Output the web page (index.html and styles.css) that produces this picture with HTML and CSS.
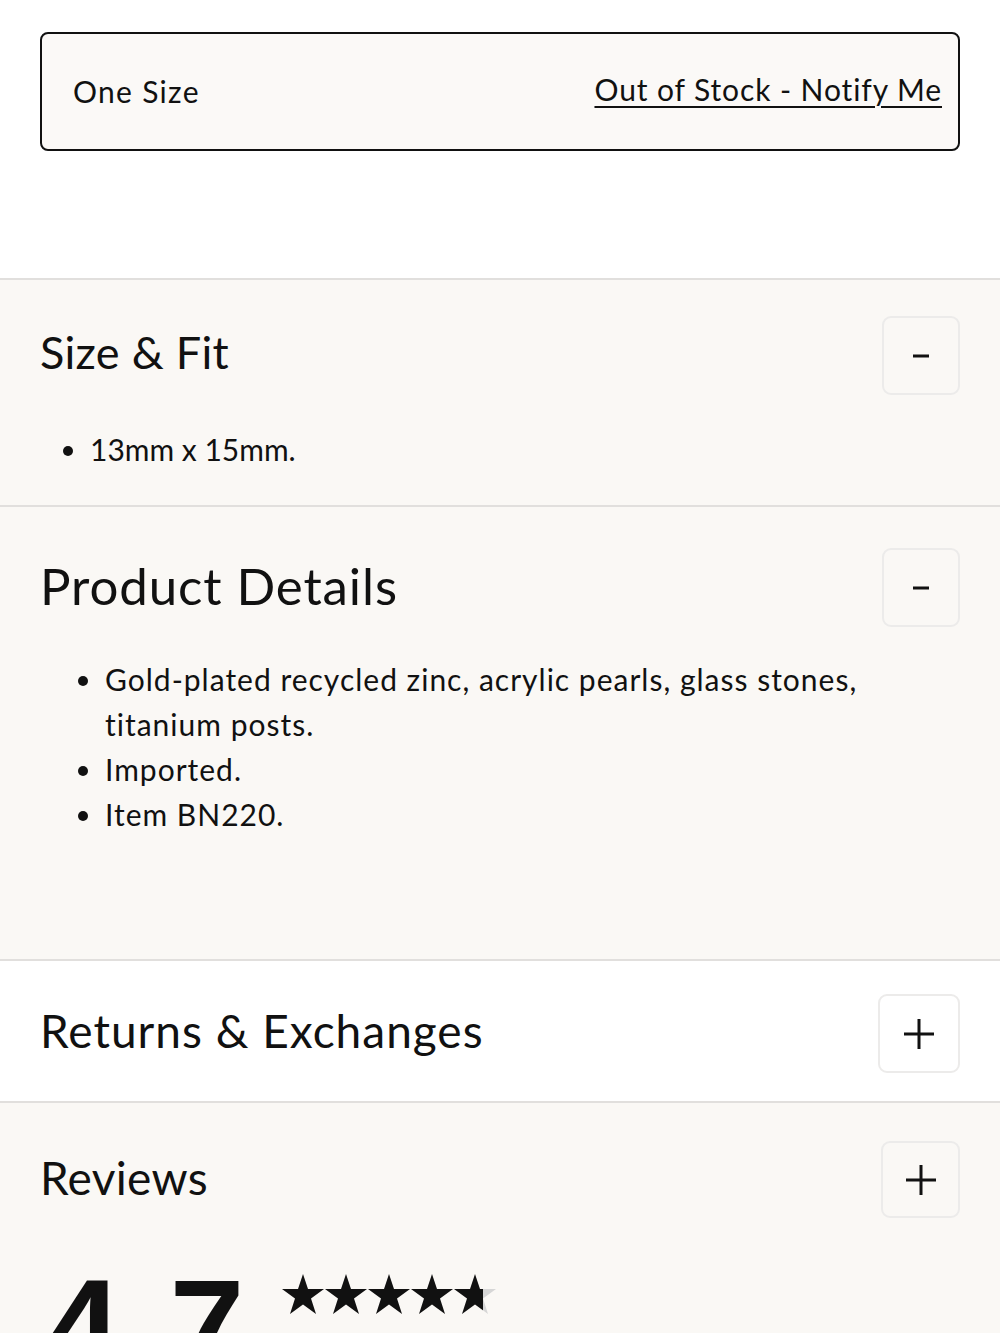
FILE: index.html
```html
<!DOCTYPE html>
<html lang="en">
<head>
<meta charset="utf-8">
<title>Product</title>
<link rel="stylesheet" href="styles.css">
</head>
<body>
<div class="size-box">
  <span class="size-label">One Size</span>
  <a class="notify" href="#">Out of Stock - Notify Me</a>
</div>

<section class="acc acc-tint acc-size">
  <div class="acc-head">
    <h2 class="acc-title t-size">Size &amp; Fit</h2>
    <button class="acc-btn" aria-label="Collapse">
      <svg width="16" height="4" viewBox="0 0 16 4"><rect x="0" y="0.5" width="16" height="3" fill="#111"/></svg>
    </button>
  </div>
  <ul class="acc-list list-size">
    <li>13mm x 15mm.</li>
  </ul>
</section>

<section class="acc acc-tint acc-details">
  <div class="acc-head">
    <h2 class="acc-title t-details">Product Details</h2>
    <button class="acc-btn" aria-label="Collapse">
      <svg width="16" height="4" viewBox="0 0 16 4"><rect x="0" y="0.5" width="16" height="3" fill="#111"/></svg>
    </button>
  </div>
  <ul class="acc-list list-details">
    <li>Gold-plated recycled zinc, acrylic pearls, glass stones,<br>titanium posts.</li>
    <li>Imported.</li>
    <li>Item BN220.</li>
  </ul>
</section>

<section class="acc acc-white acc-returns">
  <div class="acc-head">
    <h2 class="acc-title t-returns">Returns &amp; Exchanges</h2>
    <button class="acc-btn acc-btn-wide" aria-label="Expand">
      <svg width="32" height="32" viewBox="0 0 32 32"><path d="M16 1v30M1 16h30" stroke="#111" stroke-width="3" fill="none"/></svg>
    </button>
  </div>
</section>

<section class="acc acc-tint acc-reviews">
  <div class="acc-head">
    <h2 class="acc-title t-reviews">Reviews</h2>
    <button class="acc-btn" aria-label="Expand">
      <svg width="32" height="32" viewBox="0 0 32 32"><path d="M16 1v30M1 16h30" stroke="#111" stroke-width="3" fill="none"/></svg>
    </button>
  </div>
  <div class="rating">
    <span class="rating-num">4.7</span>
    <svg class="stars" width="214" height="40" viewBox="0 0 214 40">
      <defs>
        <path id="st" d="M21 0 L26 15 L42 15 L29 24.5 L34 40 L21 30.5 L8 40 L13 24.5 L0 15 L16 15 Z"/>
        <linearGradient id="part" x1="0" x2="1" y1="0" y2="0">
          <stop offset="0.7" stop-color="#111"/>
          <stop offset="0.7" stop-color="#d6d6d6"/>
        </linearGradient>
      </defs>
      <use href="#st" x="0" fill="#111"/>
      <use href="#st" x="43" fill="#111"/>
      <use href="#st" x="86" fill="#111"/>
      <use href="#st" x="129" fill="#111"/>
      <use href="#st" x="172" fill="url(#part)"/>
    </svg>
  </div>
</section>
</body>
</html>
```

FILE: styles.css
```css
* { box-sizing: border-box; }
html, body { margin: 0; padding: 0; }
body {
  background: #ffffff;
  color: #111111;
  font-family: Lato, "Open Sans", sans-serif;
  overflow: hidden;
  height: 1333px;
}

.size-box {
  margin: 32px 40px 127px;
  height: 119px;
  border: 2px solid #111;
  border-radius: 8px;
  background: #fbf9f7;
  display: flex;
  align-items: center;
  justify-content: space-between;
  padding: 0 16px 0 31px;
}
.size-label {
  font-size: 30px;
  letter-spacing: 1.3px;
  margin-bottom: 2px;
}
.notify {
  font-size: 30px;
  color: #111;
  text-decoration: underline;
  text-decoration-thickness: 2px;
  text-underline-offset: 5px;
  letter-spacing: 0.9px;
  margin-bottom: 6px;
}

.acc {
  border-top: 2px solid #e1dfdd;
  padding: 0 40px 0 40px;
}
.acc-tint { background: #faf8f5; }
.acc-white { background: #ffffff; }

.acc-head {
  display: flex;
  align-items: center;
  justify-content: space-between;
}
.acc-title {
  margin: 0;
  font-weight: 400;
  color: #111;
  letter-spacing: 0.3px;
}
.t-size { font-size: 45px; margin-bottom: 8px; }
.t-details { font-size: 51px; letter-spacing: 0.9px; margin-bottom: 4px; }
.t-returns { font-size: 46px; letter-spacing: 1px; margin-bottom: 6px; }
.t-reviews { font-size: 46px; margin-bottom: 4px; }

.acc-btn {
  width: 78px;
  height: 79px;
  border: 2px solid #ecebea;
  border-radius: 9px;
  background: transparent;
  display: flex;
  align-items: center;
  justify-content: center;
  padding: 0;
}
.acc-btn-wide { width: 82px; }

.acc-list {
  margin: 0;
  padding: 0 0 0 50px;
  list-style: disc;
  font-size: 30px;
  line-height: 45px;
  letter-spacing: 1px;
}

.acc-size { padding-top: 36px; padding-bottom: 33px; }
.list-size { margin-top: 32px; padding-left: 50px; letter-spacing: 0; }

.acc-details { padding-top: 41px; padding-bottom: 122px; }
.list-details { margin-top: 30px; padding-left: 65px; }

.acc-returns { padding-top: 33px; padding-bottom: 28px; }

.acc-reviews { padding-top: 38px; }
.acc-reviews .acc-btn { height: 77px; width: 79px; }

.rating {
  display: flex;
  align-items: flex-start;
  gap: 32px;
  margin-top: 56px;
}
.rating-num {
  font-family: "Liberation Sans", Arial, sans-serif;
  font-weight: 700;
  font-size: 134px;
  line-height: 1;
  letter-spacing: 6px;
  margin-left: 6px;
  margin-top: -14px;
}
.stars { flex-shrink: 0; }
```
